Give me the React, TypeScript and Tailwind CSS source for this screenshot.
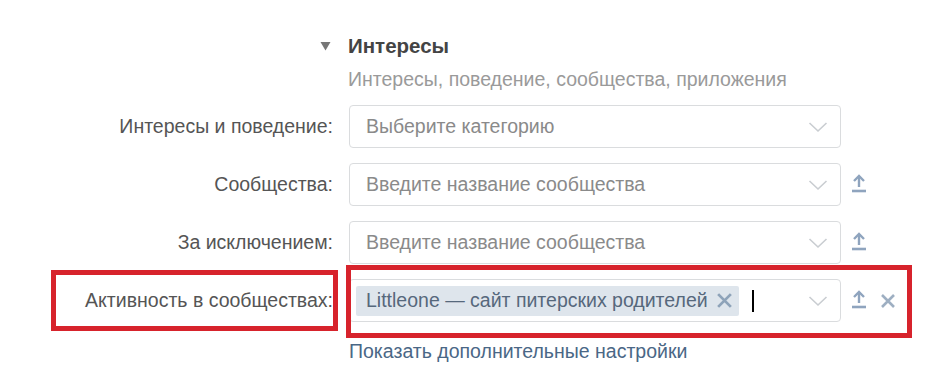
import React from "react";

const font = { fontFamily: '"Liberation Sans", Arial, sans-serif' };

function Chevron() {
  return (
    <svg width="20" height="12" viewBox="0 0 20 12" className="shrink-0">
      <path d="M1.5 2 L10 10 L18.5 2" fill="none" stroke="#c9cdd1" strokeWidth="1.6" />
    </svg>
  );
}

function UploadIcon() {
  return (
    <svg width="16" height="20" viewBox="0 0 16 20" className="shrink-0">
      <path d="M8 14 V3" stroke="#8fa4be" strokeWidth="2.4" fill="none" />
      <path d="M3 8 L8 3 L13 8" stroke="#8fa4be" strokeWidth="2.4" fill="none" />
      <path d="M1 18 H15" stroke="#8fa4be" strokeWidth="2.6" fill="none" />
    </svg>
  );
}

function Cross({ size = 16, color = "#9eafc2" }: { size?: number; color?: string }) {
  return (
    <svg width={size} height={size} viewBox="0 0 16 16" className="shrink-0">
      <path d="M2 2 L14 14 M14 2 L2 14" stroke={color} strokeWidth="2.6" fill="none" />
    </svg>
  );
}

function Field({ label, placeholder, upload }: { label: string; placeholder: string; upload?: boolean }) {
  return (
    <div className="flex items-center">
      <div className="w-[333px] text-right text-[19.5px] text-[#555]">{label}</div>
      <div className="ml-4 flex h-[43px] w-[492px] items-center justify-between rounded-[4px] border border-[#dadcde] pl-4 pr-3">
        <span className="text-[19.5px] text-[#8a8a8a]">{placeholder}</span>
        <Chevron />
      </div>
      {upload && (
        <div className="ml-[10px] -mt-[3px]">
          <UploadIcon />
        </div>
      )}
    </div>
  );
}

export default function App() {
  return (
    <div className="h-[391px] w-[946px] bg-white pt-[31px]" style={font}>
      <div className="ml-[320px] flex items-center gap-[17px]">
        <svg width="11" height="10" viewBox="0 0 11 10">
          <path d="M0.5 1 H10.5 L5.5 9.5 Z" fill="#777" />
        </svg>
        <span className="text-[20.5px] font-bold text-[#444]">Интересы</span>
      </div>
      <div className="ml-[348px] mt-[3px] text-[19.5px] text-[#9a9a9a]">Интересы, поведение, сообщества, приложения</div>

      <div className="mt-[11px] flex flex-col gap-[15px]">
        <Field label="Интересы и поведение:" placeholder="Выберите категорию" />
        <Field label="Сообщества:" placeholder="Введите название сообщества" upload />
        <Field label="За исключением:" placeholder="Введите название сообщества" upload />

        <div className="flex items-center">
          <div className="relative w-[333px] text-right text-[19.5px] text-[#555]">
            Активность в сообществах:
            <span className="pointer-events-none absolute -top-[16px] -bottom-[16px] left-[51px] -right-[5px] border-[5px] border-[#d7232c]" />
          </div>
          <div className="relative ml-4 flex items-center">
            <div className="flex h-[43px] w-[492px] items-center justify-between rounded-[4px] border border-[#dadcde] pl-[6px] pr-3">
              <div className="flex items-center">
                <div className="flex h-[30px] items-center gap-2 rounded-[2px] bg-[#dee5ec] pl-[10px] pr-[6px]">
                  <span className="text-[19.5px] text-[#56687c]">Littleone — сайт питерских родителей</span>
                  <Cross size={17} color="#8ea3b9" />
                </div>
                <span className="ml-[13px] h-[22px] w-[2px] bg-black" />
              </div>
              <Chevron />
            </div>
            <div className="ml-[10px] -mt-[3px]">
              <UploadIcon />
            </div>
            <div className="ml-[13px]">
              <Cross size={16} />
            </div>
            <span className="pointer-events-none absolute -top-[14px] -bottom-[16px] -left-[3px] -right-[16px] border-[5px] border-[#d7232c]" />
          </div>
        </div>
      </div>

      <div className="ml-[349px] mt-[15px] text-[19.5px] text-[#4a6786]">Показать дополнительные настройки</div>
    </div>
  );
}
